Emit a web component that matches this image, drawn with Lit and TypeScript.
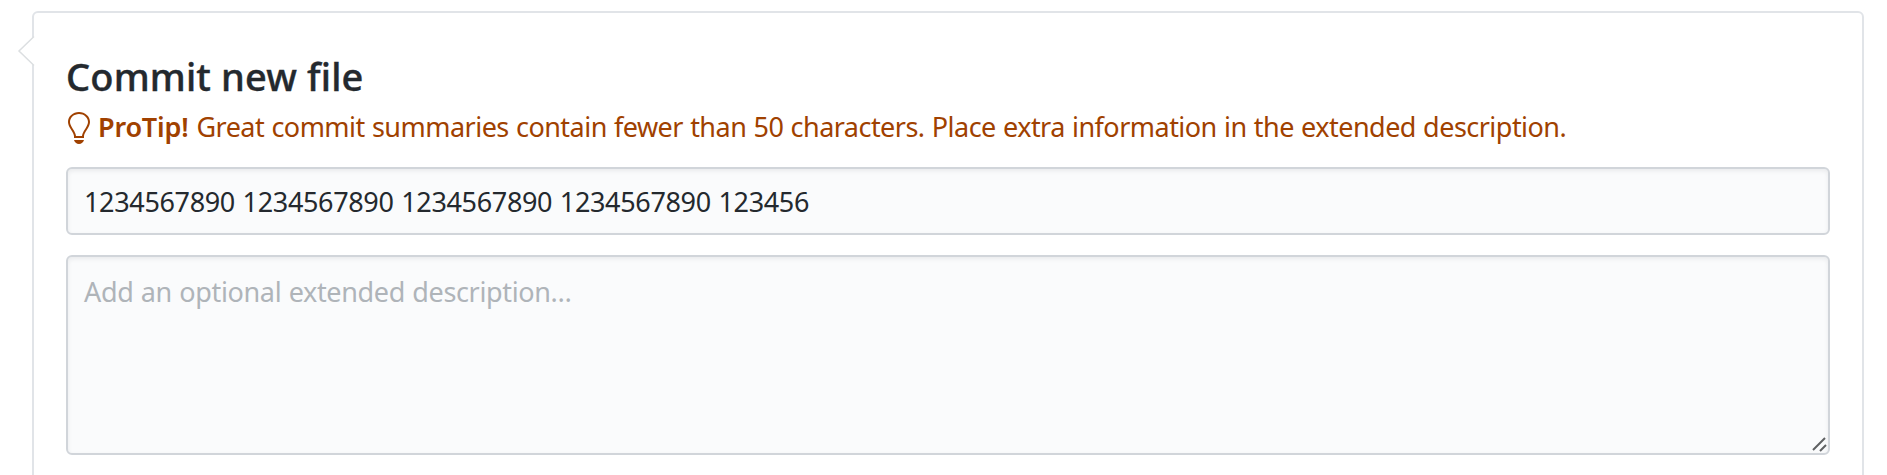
import { LitElement, html, css } from "lit";
import { customElement, property } from "lit/decorators.js";

@customElement("app-root")
export class AppRoot extends LitElement {
  static styles = css`
    :host {
      display: block;
      box-sizing: border-box;
      height: 475px;
      padding: 11px 23px 0 32px;
      overflow: hidden;
      background: #fff;
      color: #24292e;
      font-family: "Noto Sans", sans-serif;
    }
    .card {
      position: relative;
      box-sizing: border-box;
      height: 500px;
      padding: 32px;
      border: 2px solid #e1e4e8;
      border-radius: 6px;
      display: flex;
      flex-direction: column;
    }
    .caret {
      position: absolute;
      left: -17px;
      top: 22px;
      width: 18px;
      height: 32px;
    }
    .title {
      margin: 0;
      height: 62px;
      line-height: 62px;
      font-size: 38px;
      font-weight: 500;
      letter-spacing: 0.15px;
      -webkit-text-stroke: 0.4px currentColor;
      white-space: nowrap;
    }
    .tip {
      display: flex;
      align-items: center;
      height: 42px;
      margin: 0 0 18px;
      color: #a04100;
      font-size: 27px;
      line-height: 40px;
      white-space: nowrap;
    }
    .bulb {
      width: 24px;
      height: 32px;
      margin-right: 8px;
      fill: currentColor;
    }
    .strong {
      font-weight: 600;
      margin-right: 8px;
      padding-bottom: 2px;
      letter-spacing: -0.2px;
    }
    .message {
      letter-spacing: -0.525px;
      word-spacing: 0.7px;
      padding-bottom: 2px;
    }
    .field {
      display: block;
      box-sizing: border-box;
      width: 100%;
      margin: 0;
      border: 2px solid #d1d5da;
      border-radius: 6px;
      background: #fafbfc;
      box-shadow: inset 0 2px 4px rgba(27, 31, 35, 0.075);
      color: #24292e;
      font: 27px/40px "Noto Sans", sans-serif;
      outline: none;
    }
    .summary {
      height: 68px;
      padding: 12px 16px;
      letter-spacing: -0.35px;
      word-spacing: 1px;
    }
    .area {
      position: relative;
      margin-top: 20px;
    }
    .description {
      height: 200px;
      padding: 15px 16px;
      letter-spacing: -0.35px;
      word-spacing: 0.7px;
      resize: none;
      overflow: hidden;
    }
    .description::placeholder {
      color: #afb4b9;
      opacity: 1;
    }
    .grip {
      position: absolute;
      right: 3px;
      bottom: 3px;
      width: 15px;
      height: 15px;
      stroke: #5f6163;
      stroke-width: 2;
    }
  `;

  @property() summary = "1234567890 1234567890 1234567890 1234567890 123456";

  render() {
    return html`
      <section class="card">
        <svg class="caret" viewBox="0 0 18 32">
          <path d="M18 1.5H17L2 16L17 30.5H18Z" fill="#fff" />
          <path d="M17 1.5L2 16L17 30.5" fill="none" stroke="#dcdfe1" stroke-width="1.5" />
        </svg>
        <h3 class="title">Commit new file</h3>
        <p class="tip">
          <svg class="bulb" viewBox="0 0 12 16">
            <path
              fill-rule="evenodd"
              d="M6.5 0C3.48 0 1 2.19 1 5c0 .92.55 2.25 1 3 1.34 2.25 1.78 2.78 2 4v1h5v-1c.22-1.22.66-1.75 2-4 .45-.75 1-2.08 1-3 0-2.81-2.48-5-5.5-5zm3.64 7.48c-.25.44-.47.8-.67 1.11-.86 1.41-1.25 2.06-1.45 3.23-.02.05-.02.11-.02.17H5c0-.06 0-.13-.02-.17-.2-1.17-.59-1.83-1.45-3.23-.2-.31-.42-.67-.67-1.11C2.44 6.78 2 5.65 2 5c0-2.2 2.02-4 4.5-4 1.22 0 2.36.42 3.22 1.19C10.55 2.94 11 3.94 11 5c0 .66-.44 1.78-.86 2.48zM4 14h5c-.23 1.14-1.3 2-2.5 2s-2.27-.86-2.5-2z"
            />
          </svg>
          <span class="strong">ProTip!</span>
          <span class="message">Great commit summaries contain fewer than 50 characters. Place extra information in the extended description.</span>
        </p>
        <input class="field summary" type="text" .value=${this.summary} />
        <div class="area">
          <textarea class="field description" placeholder="Add an optional extended description…"></textarea>
          <svg class="grip" viewBox="0 0 15 15">
            <path d="M1 13L13 1M8 14L14 8" fill="none" />
          </svg>
        </div>
      </section>
    `;
  }
}
